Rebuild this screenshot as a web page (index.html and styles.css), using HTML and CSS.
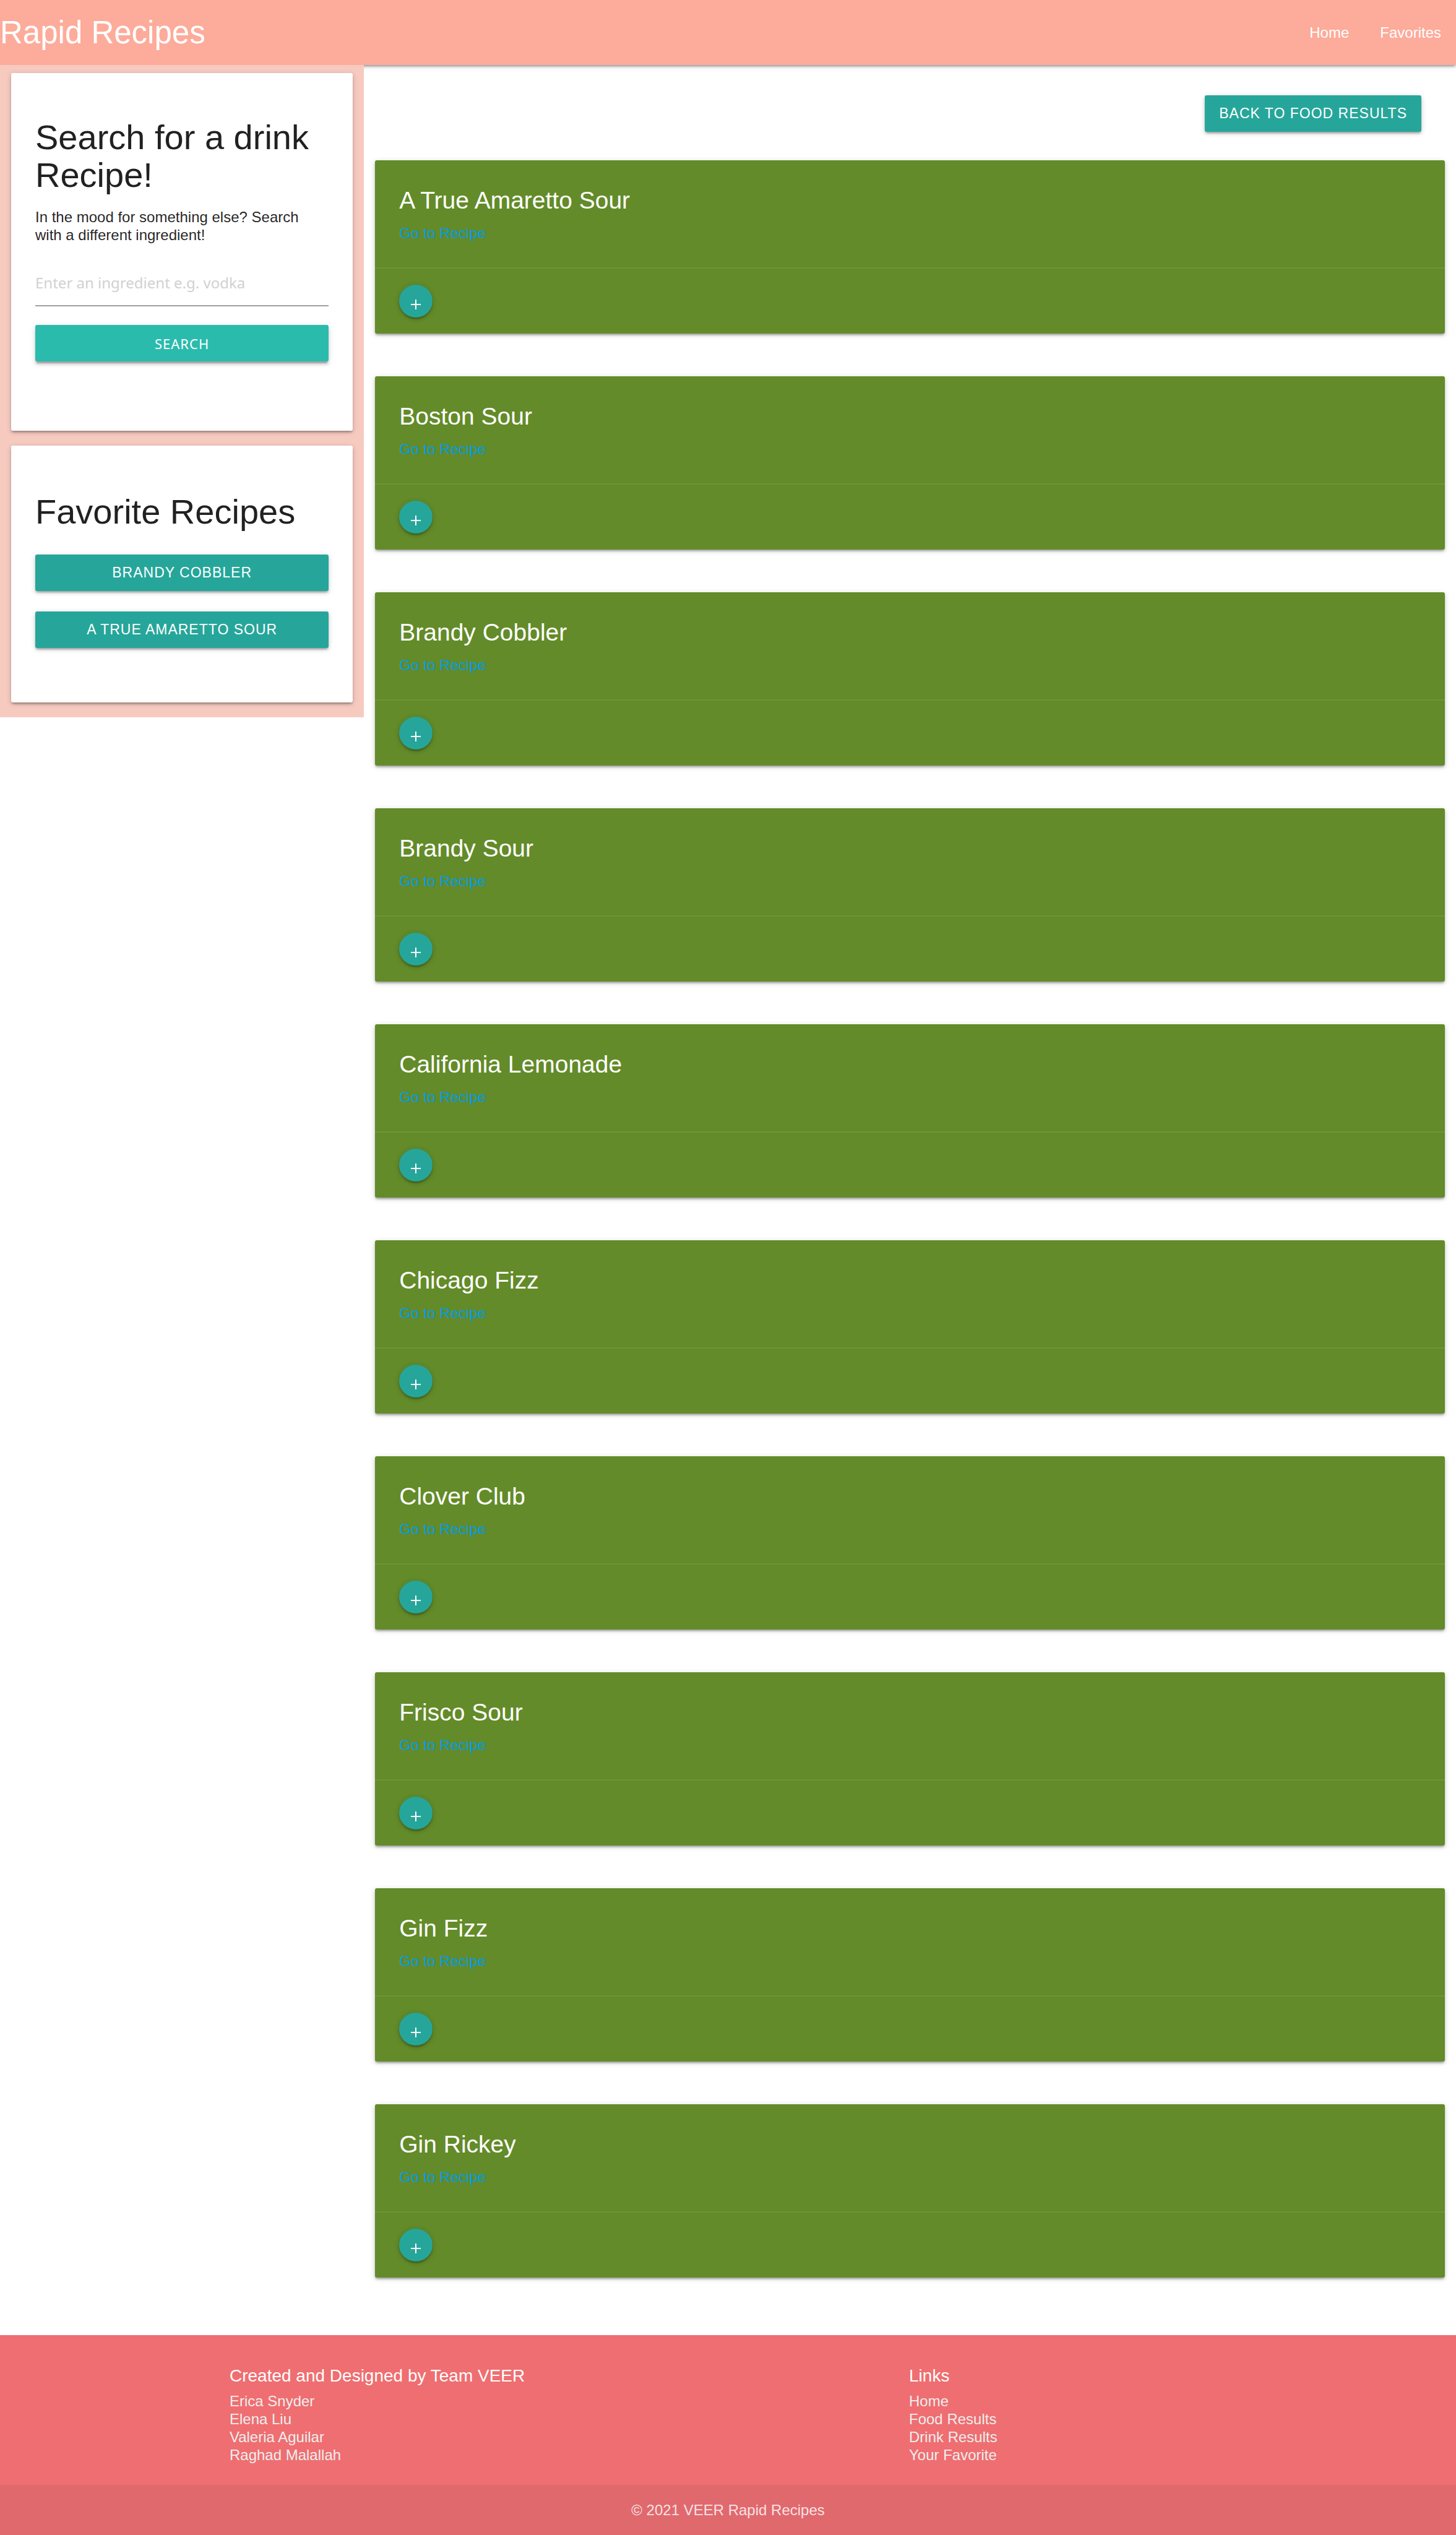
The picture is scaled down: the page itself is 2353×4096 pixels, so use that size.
FILE: index.html
```html
<!DOCTYPE html>
<html lang="en">
<head>
<meta charset="utf-8">
<title>Rapid Recipes</title>
<link rel="stylesheet" href="styles.css">
</head>
<body>
<header class="navbar">
  <a class="brand" href="#">Rapid Recipes</a>
  <nav class="nav-links">
    <a href="#">Home</a>
    <a href="#">Favorites</a>
  </nav>
</header>
<div class="layout">
  <aside class="sidebar">
    <section class="panel">
      <h2 class="panel-title">Search for a drink Recipe!</h2>
      <p class="panel-text">In the mood for something else? Search with a different ingredient!</p>
      <form class="search-form">
        <input class="search-input" type="text" aria-label="Ingredient" placeholder="Enter an ingredient e.g. vodka">
        <button class="btn btn-search" type="button">Search</button>
      </form>
    </section>
    <section class="panel panel-favorites">
      <h2 class="panel-title">Favorite Recipes</h2>
      <div class="favorites">
        <button class="btn" type="button">Brandy Cobbler</button>
        <button class="btn" type="button">A True Amaretto Sour</button>
      </div>
    </section>
  </aside>
  <main class="results">
    <div class="toolbar"><button class="btn btn-back" type="button">Back to food results</button></div>
    <article class="recipe"><div class="recipe-body"><h3 class="recipe-title">A True Amaretto Sour</h3><a class="recipe-link" href="#">Go to Recipe</a></div><div class="recipe-action"><button class="add" type="button" aria-label="Add to favorites"><svg class="plus" viewBox="0 0 16 16"><path d="M8 0v16M0 8h16"/></svg></button></div></article>
    <article class="recipe"><div class="recipe-body"><h3 class="recipe-title">Boston Sour</h3><a class="recipe-link" href="#">Go to Recipe</a></div><div class="recipe-action"><button class="add" type="button" aria-label="Add to favorites"><svg class="plus" viewBox="0 0 16 16"><path d="M8 0v16M0 8h16"/></svg></button></div></article>
    <article class="recipe"><div class="recipe-body"><h3 class="recipe-title">Brandy Cobbler</h3><a class="recipe-link" href="#">Go to Recipe</a></div><div class="recipe-action"><button class="add" type="button" aria-label="Add to favorites"><svg class="plus" viewBox="0 0 16 16"><path d="M8 0v16M0 8h16"/></svg></button></div></article>
    <article class="recipe"><div class="recipe-body"><h3 class="recipe-title">Brandy Sour</h3><a class="recipe-link" href="#">Go to Recipe</a></div><div class="recipe-action"><button class="add" type="button" aria-label="Add to favorites"><svg class="plus" viewBox="0 0 16 16"><path d="M8 0v16M0 8h16"/></svg></button></div></article>
    <article class="recipe"><div class="recipe-body"><h3 class="recipe-title">California Lemonade</h3><a class="recipe-link" href="#">Go to Recipe</a></div><div class="recipe-action"><button class="add" type="button" aria-label="Add to favorites"><svg class="plus" viewBox="0 0 16 16"><path d="M8 0v16M0 8h16"/></svg></button></div></article>
    <article class="recipe"><div class="recipe-body"><h3 class="recipe-title">Chicago Fizz</h3><a class="recipe-link" href="#">Go to Recipe</a></div><div class="recipe-action"><button class="add" type="button" aria-label="Add to favorites"><svg class="plus" viewBox="0 0 16 16"><path d="M8 0v16M0 8h16"/></svg></button></div></article>
    <article class="recipe"><div class="recipe-body"><h3 class="recipe-title">Clover Club</h3><a class="recipe-link" href="#">Go to Recipe</a></div><div class="recipe-action"><button class="add" type="button" aria-label="Add to favorites"><svg class="plus" viewBox="0 0 16 16"><path d="M8 0v16M0 8h16"/></svg></button></div></article>
    <article class="recipe"><div class="recipe-body"><h3 class="recipe-title">Frisco Sour</h3><a class="recipe-link" href="#">Go to Recipe</a></div><div class="recipe-action"><button class="add" type="button" aria-label="Add to favorites"><svg class="plus" viewBox="0 0 16 16"><path d="M8 0v16M0 8h16"/></svg></button></div></article>
    <article class="recipe"><div class="recipe-body"><h3 class="recipe-title">Gin Fizz</h3><a class="recipe-link" href="#">Go to Recipe</a></div><div class="recipe-action"><button class="add" type="button" aria-label="Add to favorites"><svg class="plus" viewBox="0 0 16 16"><path d="M8 0v16M0 8h16"/></svg></button></div></article>
    <article class="recipe"><div class="recipe-body"><h3 class="recipe-title">Gin Rickey</h3><a class="recipe-link" href="#">Go to Recipe</a></div><div class="recipe-action"><button class="add" type="button" aria-label="Add to favorites"><svg class="plus" viewBox="0 0 16 16"><path d="M8 0v16M0 8h16"/></svg></button></div></article>
  </main>
</div>
<footer class="footer">
  <div class="footer-columns">
    <div class="footer-column">
      <h4 class="footer-title">Created and Designed by Team VEER</h4>
      <ul class="footer-list"><li>Erica Snyder</li><li>Elena Liu</li><li>Valeria Aguilar</li><li>Raghad Malallah</li></ul>
    </div>
    <div class="footer-column">
      <h4 class="footer-title">Links</h4>
      <ul class="footer-list"><li><a href="#">Home</a></li><li><a href="#">Food Results</a></li><li><a href="#">Drink Results</a></li><li><a href="#">Your Favorite</a></li></ul>
    </div>
  </div>
  <div class="copyright">© 2021 VEER Rapid Recipes</div>
</footer>
</body>
</html>
```
FILE: styles.css
```css
:root {
  --shadow: 0 3px 3px 0 rgba(0, 0, 0, 0.14), 0 5px 2px -3px rgba(0, 0, 0, 0.12), 0 2px 8px 0 rgba(0, 0, 0, 0.2);
  --sans: "Liberation Sans", Arial, sans-serif;
  --ui: "Noto Sans", "Open Sans", sans-serif;
}

* { box-sizing: border-box; }

body {
  margin: 0;
  background: #fff;
  color: rgba(0, 0, 0, 0.87);
  font-family: var(--sans);
  font-size: 24px;
  line-height: 29px;
}

h2, h3, h4, p, ul { margin: 0; font-weight: 400; }
ul { padding: 0; list-style: none; }
a { text-decoration: none; color: inherit; }

.navbar {
  display: flex;
  justify-content: space-between;
  align-items: center;
  height: 105px;
  background: #fdab9a;
  color: #fff;
  box-shadow: var(--shadow);
}
.brand { font-size: 51px; line-height: 105px; }
.nav-links { display: flex; gap: 50px; padding-right: 24px; }

.layout { display: grid; grid-template-columns: 1fr 3fr; align-items: start; }

.sidebar {
  position: relative;
  display: flex;
  flex-direction: column;
  gap: 24px;
  padding: 13px 18px 24px;
  background: #f7cac0;
}
.panel {
  padding: 73px 39px 112px;
  border-radius: 3px;
  background: #fff;
  box-shadow: var(--shadow);
}
.panel-favorites { padding-top: 76px; padding-bottom: 88px; }
.panel-title { font-size: 56px; line-height: 61px; }
.panel-text { margin-top: 23px; }

.search-form { display: flex; flex-direction: column; }
.search-input {
  height: 75px;
  margin: 26px 0 30px;
  padding: 0;
  border: 0;
  border-bottom: 2px solid #9e9e9e;
  background: transparent;
  font-family: var(--ui);
  font-size: 24px;
}
.search-input::placeholder { color: #d1d1d1; opacity: 1; }

.btn {
  height: 59px;
  padding: 0 23px;
  border: 0;
  border-radius: 3px;
  background: #26a69a;
  color: #fff;
  box-shadow: var(--shadow);
  font-family: var(--sans);
  font-size: 23px;
  letter-spacing: 1px;
  text-transform: uppercase;
}
.btn-search {
  background: #2bbbad;
  font-family: var(--ui);
  font-size: 22px;
  box-shadow: 0 5px 5px 0 rgba(0, 0, 0, 0.14), 0 2px 11px 0 rgba(0, 0, 0, 0.12), 0 5px 2px -2px rgba(0, 0, 0, 0.2);
}
.favorites { display: flex; flex-direction: column; gap: 33px; margin-top: 39px; }

.results { padding: 49px 18px 93px; }
.toolbar { display: flex; justify-content: flex-end; margin-bottom: 46px; padding-right: 38px; }

.recipe {
  border-radius: 3px;
  background: #638b29;
  color: #fff;
  box-shadow: var(--shadow);
}
.recipe + .recipe { margin-top: 69px; }
.recipe-body { padding: 39px 39px 41px; }
.recipe-title { margin-bottom: 12px; font-size: 39px; line-height: 52px; }
.recipe-link { display: block; color: #039be5; }
.recipe-action { padding: 26px 39px; border-top: 2px solid #6f933c; }
.add {
  display: grid;
  place-items: center;
  width: 54px;
  height: 53px;
  padding: 10px 0 0;
  border: 0;
  border-radius: 50%;
  background: #26a69a;
  box-shadow: var(--shadow);
}
.plus { width: 16px; height: 16px; fill: none; stroke: #fff; stroke-width: 2; }

.footer { background: #ef6e71; color: #fff; }
.footer-columns {
  display: grid;
  grid-template-columns: 2fr 1fr;
  width: 70%;
  margin: 0 auto;
  padding: 48px 0 34px;
}
.footer-column { padding: 0 18px; }
.footer-title { margin-bottom: 9px; font-size: 28px; line-height: 35px; }
.footer-list { color: #eee; line-height: 29px; }
.copyright {
  background: #e0696e;
  color: #f9e1e2;
  line-height: 81px;
  text-align: center;
}
```
